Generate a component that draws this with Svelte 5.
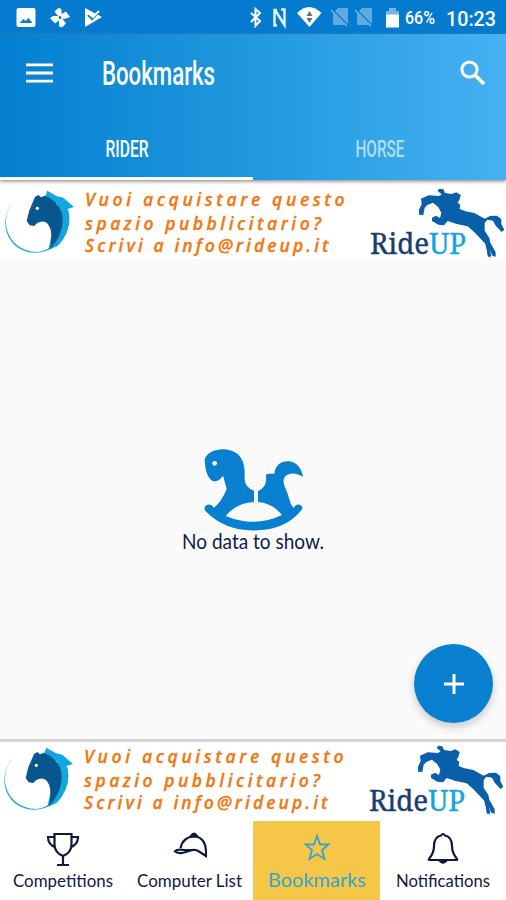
<script lang="ts">
  const navItems = [
    { id: 'competitions', label: 'Competitions', width: 100 },
    { id: 'list', label: 'Computer List', width: 105 },
    { id: 'bookmarks', label: 'Bookmarks', width: 98 },
    { id: 'notifications', label: 'Notifications', width: 94 }
  ];

  let activeTab = $state('RIDER');
  let activeNav = $state('bookmarks');
</script>

{#snippet banner()}
  <svg class="banner-art" width="506" height="75" viewBox="0 0 506 75">
    <g transform="translate(0 -4) scale(.33333)">
      <path fill="#12a5df" d="M42 62C10 100 8 150 34 184C68 230 140 228 178 187C200 158 195 123 185 92L222 81L190 53L171 49L142 32L136 48L175 75Q205 130 165 187Q145 214 112 216C64 216 26 185 19 139C15 108 24 86 42 62Z" />
      <path fill="#12a5df" d="M175 70L205 90Q219 150 173 198L145 210Z" />
      <path fill="#07568f" d="M105 51L115 45L123 52L135 47Q169 60 184 94C196 132 180 178 150 207Q160 159 147 137Q137 121 119 126L109 131L103 138L89 136L80 123L88 91Z" />
      <circle cx="112" cy="85" r="5" fill="#fff" />
    </g>
    <g class="pitch">
      <text x="85" y="22" textLength="259.500">Vuoi acquistare questo</text>
      <text x="85" y="46" textLength="236">spazio pubblicitario?</text>
      <text x="85" y="68" textLength="243.500">Scrivi a info@rideup.it</text>
    </g>
    <g transform="translate(360 -4) scale(.33333)">
      <path fill="#0860ab" d="M183 56L206 46L237 48L245 43L233 33L237 26L250 28L255 39L275 42L289 37L302 45L299 58L293 68L301 75L299 87L317 94L343 99L374 116L390 108L411 107L424 118L424 132L433 149L425 156L407 137L399 122L382 119L374 129L374 152L388 174L391 188L407 217L407 230L398 228L386 203L389 229L397 235L383 229L379 194L345 158L323 139L290 132L263 123L252 136L235 134L216 123L216 113L228 107L240 114L244 98L235 82L219 68L202 75L194 83L190 105L177 104L177 89L185 72Z" />
      <path fill="none" stroke="#0860ab" stroke-width="9" d="M349 155L381 188L398 212M378 182L390 229" />
    </g>
    <text class="brand" x="370" y="69.5" textLength="96" lengthAdjust="spacingAndGlyphs">Ride<tspan>UP</tspan></text>
  </svg>
{/snippet}

<div class="screen">
  <div class="status-bar">
    <svg width="506" height="34" viewBox="0 0 506 34">
      <g fill="#fff">
        <path fill-rule="evenodd" d="M18.500 8H33.500Q35.500 8 35.500 10V25Q35.500 27 33.500 27H18.500Q16.500 27 16.500 25V10Q16.500 8 18.500 8ZM19.500 23H32.500L28.500 18L25.500 21L23.500 19Z" />
        <path fill-rule="evenodd" d="M58.500 8L61.500 9V14L66 11.500L70 17L66 18.500L62.500 19L66 23.500L62 27.500L59 26.500V20.500L55 23.500L50 18L53 16L58 16L54.500 11.500ZM60 16A1.500 1.500 0 1 0 60 19A1.500 1.500 0 0 0 60 16Z" />
        <path d="M85 8L102 17L85 27Z" />
        <path d="M297 13Q309 1 321.500 13L309.500 27Z" />
        <path d="M386 11H389V8H396V11H399V27H386Z" opacity=".45" />
        <path d="M386 14.500H399V27.500H386Z" />
        <path d="M333 13L338 8H348V25H333ZM357 13L362 8H372V25H357Z" opacity=".36" />
      </g>
      <path d="M88 15L92 19L101 10" fill="none" stroke="#087dcc" stroke-width="2" />
      <path d="M89 14L93 17L99 11" fill="none" stroke="#fff" stroke-width="2" />
      <path d="M251 13L260 21L255.500 26V9L260 13L251 22" fill="none" stroke="#fff" stroke-width="2" />
      <path d="M277 10H274.500V25.500H277M275 10L284.500 25V9.500H281" fill="none" stroke="#e7f4ff" stroke-width="2.400" />
      <path d="M306.500 16L309.500 11L312.500 16ZM306.500 18L309.500 23L312.500 18Z" fill="#68706e" />
      <path d="M332 10L348 26M356 10L372 26" stroke="#067bcc" stroke-width="2.500" />
      <path d="M331 10L347 26M355 10L371 26" stroke="#79b9e4" stroke-width="1.200" />
      <text class="battery" x="405" y="24.300" textLength="30" lengthAdjust="spacingAndGlyphs">66%</text>
      <text class="clock" x="446" y="25.500" textLength="50" lengthAdjust="spacingAndGlyphs">10:23</text>
    </svg>
  </div>

  <header>
    <div class="toolbar">
      <button class="menu" aria-label="Menu">
        <svg width="27" height="20" viewBox="0 0 27 20">
          <path d="M0 1.800H27M0 10H27M0 18.200H27" stroke="#fff" stroke-width="2.800" />
        </svg>
      </button>
      <h1>
        <svg width="116" height="40" viewBox="0 0 116 40">
          <text x="1" y="32" textLength="113" lengthAdjust="spacingAndGlyphs">Bookmarks</text>
        </svg>
      </h1>
      <button class="search" aria-label="Search">
        <svg width="26" height="26" viewBox="0 0 26 26" fill="none" stroke="#fff">
          <circle cx="9.500" cy="9.500" r="7.600" stroke-width="3" />
          <path d="M15 15L24 24" stroke-width="3.700" />
        </svg>
      </button>
    </div>
    <div class="tabs">
      {#each ['RIDER', 'HORSE'] as tab}
        <button class="tab" class:selected={activeTab === tab} onclick={() => (activeTab = tab)}>
          <svg width="50" height="30" viewBox="0 0 50 30">
            <text x={tab === 'RIDER' ? 3.5 : 0.5} y="24" textLength={tab === 'RIDER' ? 43 : 49} lengthAdjust="spacingAndGlyphs">{tab}</text>
          </svg>
        </button>
      {/each}
    </div>
  </header>

  <div class="banner">{@render banner()}</div>

  <main>
    <svg class="rocking-horse" width="170" height="96" viewBox="0 0 510 288">
      <path fill="#087fcf" d="M104 73C115 40 173 32 204 58Q222 75 224 108V132Q225 158 252 167V201Q199 204 167 243Q254 279 336 240Q307 204 264 201V168Q292 158 288 123Q288 116 296 116H313C316 87 337 76 359 79Q392 85 399 126C382 114 355 110 344 127C333 144 351 162 357 190Q360 207 371 219Q377 207 389 209Q403 215 394 226Q347 284 263 286Q168 291 107 229Q100 219 107 212Q122 203 132 218Q157 197 170 161L159 122Q145 142 128 138Q106 126 104 73Z" />
      <circle cx="134" cy="85" r="7" fill="#fff" />
    </svg>
    <svg class="message" width="142" height="28" viewBox="0 0 142 28">
      <text x="0" y="20" textLength="142" lengthAdjust="spacingAndGlyphs">No data to show.</text>
    </svg>
    <button class="fab" aria-label="Add">
      <svg width="20" height="20" viewBox="0 0 20 20">
        <path d="M10 0V20M0 10H20" stroke="#fff" stroke-width="3" />
      </svg>
    </button>
  </main>

  <div class="banner bottom">{@render banner()}</div>

  <nav>
    {#each navItems as item}
      <button class="nav-item" class:active={activeNav === item.id} onclick={() => (activeNav = item.id)}>
        <svg class="nav-icon" width="36" height="36" viewBox="0 0 36 36" fill="none" stroke="currentColor" stroke-width="2.200">
          {#if item.id === 'competitions'}
            <path d="M9.500 2H26.500V13Q26 21 18 24Q10 21 9.500 13ZM9.500 5H3Q3 13 11 15.500M26.500 5H33Q33 13 25 15.500M18 24V32M12 33H24" />
          {:else if item.id === 'list'}
            <path d="M8.500 16Q11 5 22 4.500Q35 5 34 24L27 19.500Q23 16.500 17 19L12 20.500Q6 22 3 19.500Q5 17 12 18H20" />
            <path d="M19 4Q22-1 25 4Z" fill="currentColor" />
          {:else if item.id === 'bookmarks'}
            <path d="M18 4L21 12.500H29.500L23 18L25.500 27L18 22L10.500 27L13 18L6.500 12.500H15Z" />
          {:else}
            <path d="M4 27Q9 21 9 14Q9 5 16 3.500Q18 .5 20 3.500Q27 5 27 14Q27 21 32 27Q33 28 31 28H5Q3 28 4 27Z" />
            <path d="M15 29Q18 32 21 29Z" fill="currentColor" />
          {/if}
        </svg>
        <svg width={item.width} height="26" viewBox="0 0 {item.width} 26">
          <text x="0" y="19" textLength={item.width} lengthAdjust="spacingAndGlyphs">{item.label}</text>
        </svg>
      </button>
    {/each}
  </nav>
</div>

<style>
  :global(body) {
    margin: 0;
    background: #fafafa;
  }

  .screen {
    width: 506px;
    height: 900px;
    display: flex;
    flex-direction: column;
    overflow: hidden;
    font-family: Lato, sans-serif;
  }

  svg {
    display: block;
    flex-shrink: 0;
    overflow: visible;
  }

  button {
    border: 0;
    padding: 0;
    background: none;
    cursor: pointer;
  }

  .status-bar {
    height: 34px;
    background: #047bce;
    flex-shrink: 0;
  }

  .battery,
  .clock {
    fill: #fff;
    font-family: Roboto, sans-serif;
    font-weight: 500;
  }

  .battery {
    font-size: 17.5px;
  }

  .clock {
    font-size: 20px;
  }

  header {
    height: 146px;
    flex-shrink: 0;
    display: flex;
    flex-direction: column;
    background: linear-gradient(90deg, #047fd0, #229adf 52%, #46b1f3);
    box-shadow: 0 1px 4px #777;
    z-index: 1;
  }

  .toolbar {
    height: 82px;
    display: flex;
    align-items: center;
    padding: 0 20px 4px 26px;
    box-sizing: border-box;
  }

  h1 {
    margin: 0 auto 0 48px;
  }

  h1 text {
    fill: #fff;
    font: 500 33px Roboto, sans-serif;
  }

  .tabs {
    display: flex;
    flex: 1;
  }

  .tab {
    flex: 1;
    display: flex;
    justify-content: center;
    padding-top: 17px;
    border-bottom: 3px solid transparent;
  }

  .tab.selected {
    border-color: #fff;
  }

  .tab text {
    fill: #b2ddf8;
    font: 500 24px Roboto, sans-serif;
  }

  .tab.selected text {
    fill: #fff;
  }

  .banner {
    height: 75px;
    padding-top: 4px;
    background: #fff;
    flex-shrink: 0;
  }

  .banner.bottom {
    height: 79px;
    border-top: 3px solid #d5d5d5;
    padding-top: 0;
  }

  .bottom .banner-art {
    margin: -1px 0 0 -1px;
  }

  .pitch {
    fill: #f07813;
    stroke: #f07813;
    stroke-width: 0.3px;
    font: italic 600 17.5px "Open Sans", sans-serif;
  }

  .brand {
    fill: #173e72;
    stroke: #173e72;
    stroke-width: 0.4px;
    font: 29px "Noto Serif", "DejaVu Serif", "Liberation Serif", serif;
  }

  .brand tspan {
    fill: #12a5df;
    stroke: #12a5df;
  }

  main {
    position: relative;
    flex: 1;
    display: flex;
    flex-direction: column;
    align-items: center;
    padding-top: 176px;
    background: #fafafa;
  }

  .rocking-horse {
    margin-left: 4px;
  }

  .message {
    margin-top: -2px;
  }

  .message text {
    fill: #101b48;
    font-size: 20.5px;
  }

  .fab {
    position: absolute;
    right: 13px;
    bottom: 16px;
    width: 79px;
    height: 79px;
    border-radius: 50%;
    background: #087fcf;
    box-shadow: 0 4px 8px rgba(0, 0, 0, 0.2);
    display: grid;
    place-items: center;
  }

  nav {
    height: 79px;
    display: grid;
    grid-template-columns: 126.5px 126.5px 127px 126px;
    background: #fff;
    flex-shrink: 0;
  }

  .nav-item {
    display: flex;
    flex-direction: column;
    align-items: center;
    padding-top: 11px;
    color: #11183e;
  }

  .nav-item.active {
    background: #f5c647;
    color: #35a5cb;
  }

  .nav-item text {
    fill: currentColor;
    font: 17px Lato, sans-serif;
  }

  .nav-item.active .nav-icon {
    stroke-width: 1.8;
  }

  .nav-item.active text {
    font-size: 20px;
  }
</style>
